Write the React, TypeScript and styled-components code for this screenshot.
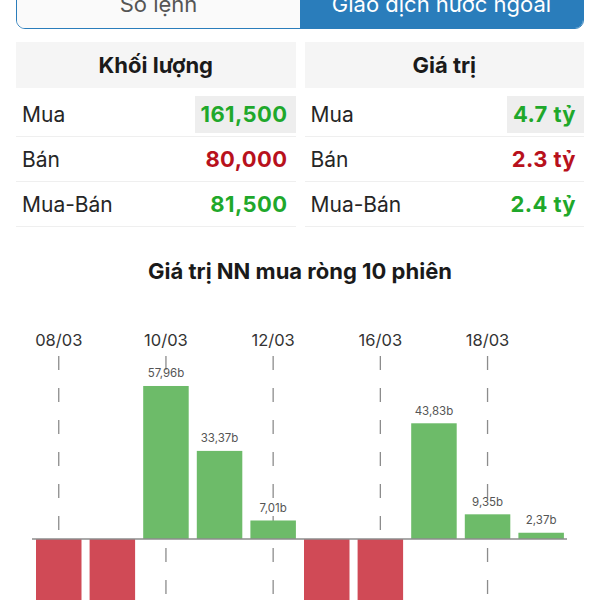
import React from "react";
import styled, { createGlobalStyle } from "styled-components";

const GlobalStyle = createGlobalStyle`
  html, body {
    margin: 0;
    padding: 0;
    background: #ffffff;
    overflow: hidden;
  }
  body {
    font-family: Inter, "Noto Sans", "Liberation Sans", sans-serif;
    color: #1c1c1e;
  }
`;

const Page = styled.div`
  width: 600px;
  height: 600px;
  overflow: hidden;
  display: flex;
  flex-direction: column;
`;

const Top = styled.div`
  padding: 0 16px;
  display: flex;
  flex-direction: column;
`;

const SegmentBar = styled.div`
  margin-top: -21px;
  height: 50px;
  display: grid;
  grid-template-columns: 1fr 1fr;
  border: 1.5px solid #2a7dbb;
  border-radius: 9px;
  overflow: hidden;
  box-sizing: border-box;
`;

const Segment = styled.div<{ $active?: boolean }>`
  display: flex;
  align-items: center;
  justify-content: center;
  font-size: 22px;
  background: ${(p) => (p.$active ? "#2a7dbb" : "#fafafa")};
  color: ${(p) => (p.$active ? "#ffffff" : "#555555")};
`;

const Tables = styled.div`
  margin-top: 13px;
  display: grid;
  grid-template-columns: 1fr 1fr;
  column-gap: 9px;
`;

const Table = styled.div`
  display: flex;
  flex-direction: column;
`;

const Header = styled.div`
  height: 46px;
  background: #f5f5f5;
  display: flex;
  align-items: center;
  justify-content: center;
  font-size: 22px;
  font-weight: 700;
  color: #1a1a1a;
  margin-bottom: 4px;
`;

const Row = styled.div`
  height: 44px;
  display: flex;
  align-items: center;
  justify-content: space-between;
  border-bottom: 1px solid #efefef;
`;

const Label = styled.span`
  padding-left: 6px;
  font-size: 21px;
  color: #262626;
`;

const Value = styled.span<{ $tone: "up" | "down"; $flash?: boolean }>`
  height: 37px;
  display: flex;
  align-items: center;
  padding: 0 8px 0 6px;
  font-size: 22px;
  font-weight: 700;
  letter-spacing: 0.4px;
  background: ${(p) => (p.$flash ? "#eeeeee" : "transparent")};
  color: ${(p) => (p.$tone === "up" ? "#1fa82b" : "#b8111c")};
`;

const Title = styled.h2`
  margin: 31px 0 0;
  text-align: center;
  font-size: 22px;
  line-height: 26px;
  font-weight: 700;
  color: #1a1a1a;
`;

const Chart = styled.svg`
  display: block;
  margin-top: 16px;
  flex-shrink: 0;
  font-family: Inter, "Noto Sans", "Liberation Sans", sans-serif;
`;

type RowData = { label: string; value: string; tone: "up" | "down"; flash?: boolean };

const volume: RowData[] = [
  { label: "Mua", value: "161,500", tone: "up", flash: true },
  { label: "Bán", value: "80,000", tone: "down" },
  { label: "Mua-Bán", value: "81,500", tone: "up" },
];

const valueRows: RowData[] = [
  { label: "Mua", value: "4.7 tỷ", tone: "up", flash: true },
  { label: "Bán", value: "2.3 tỷ", tone: "down" },
  { label: "Mua-Bán", value: "2.4 tỷ", tone: "up" },
];

const sessions = [
  { date: "08/03", v: -42.5 },
  { date: "09/03", v: -38.1 },
  { date: "10/03", v: 57.96 },
  { date: "11/03", v: 33.37 },
  { date: "12/03", v: 7.01 },
  { date: "15/03", v: -35.4 },
  { date: "16/03", v: -30.2 },
  { date: "17/03", v: 43.83 },
  { date: "18/03", v: 9.35 },
  { date: "19/03", v: 2.37 },
];

const fmt = (v: number) => v.toFixed(2).replace(".", ",") + "b";

const NetChart: React.FC = () => {
  const zero = 239;
  const scale = 2.64;
  const x0 = 36;
  const pitch = 53.6;
  const bw = 45.5;
  return (
    <Chart width={600} height={330} viewBox="0 0 600 330">
      {sessions.map((s, i) =>
        i % 2 === 0 ? (
          <g key={"d" + i}>
            <text
              x={x0 + i * pitch + bw / 2}
              y={46}
              textAnchor="middle"
              fontSize={16.5}
              fill="#333333"
            >
              {s.date}
            </text>
            <line
              x1={x0 + i * pitch + bw / 2}
              x2={x0 + i * pitch + bw / 2}
              y1={56}
              y2={330}
              stroke="#8c8c8c"
              strokeWidth={1.3}
              strokeDasharray="14 18"
            />
          </g>
        ) : null
      )}
      {sessions.map((s, i) => {
        const h = Math.abs(s.v) * scale;
        const x = x0 + i * pitch;
        if (s.v >= 0) {
          return (
            <g key={"b" + i}>
              <rect x={x} y={zero - h} width={bw} height={h} fill="#6dbb69" />
              <text
                x={x + bw / 2}
                y={zero - h - 8.5}
                textAnchor="middle"
                fontSize={11.5}
                fill="#555555"
              >
                {fmt(s.v)}
              </text>
            </g>
          );
        }
        return <rect key={"b" + i} x={x} y={zero} width={bw} height={h} fill="#d04a56" />;
      })}
      <line x1={32} x2={567} y1={zero} y2={zero} stroke="#8c8c8c" strokeWidth={1.5} />
    </Chart>
  );
};

const StatTable: React.FC<{ title: string; rows: RowData[] }> = ({ title, rows }) => (
  <Table>
    <Header>{title}</Header>
    {rows.map((r) => (
      <Row key={r.label}>
        <Label>{r.label}</Label>
        <Value $tone={r.tone} $flash={r.flash}>
          {r.value}
        </Value>
      </Row>
    ))}
  </Table>
);

export default function App() {
  return (
    <Page>
      <GlobalStyle />
      <Top>
        <SegmentBar>
          <Segment>Sổ lệnh</Segment>
          <Segment $active>Giao dịch nước ngoài</Segment>
        </SegmentBar>
        <Tables>
          <StatTable title="Khối lượng" rows={volume} />
          <StatTable title="Giá trị" rows={valueRows} />
        </Tables>
      </Top>
      <Title>Giá trị NN mua ròng 10 phiên</Title>
      <NetChart />
    </Page>
  );
}
